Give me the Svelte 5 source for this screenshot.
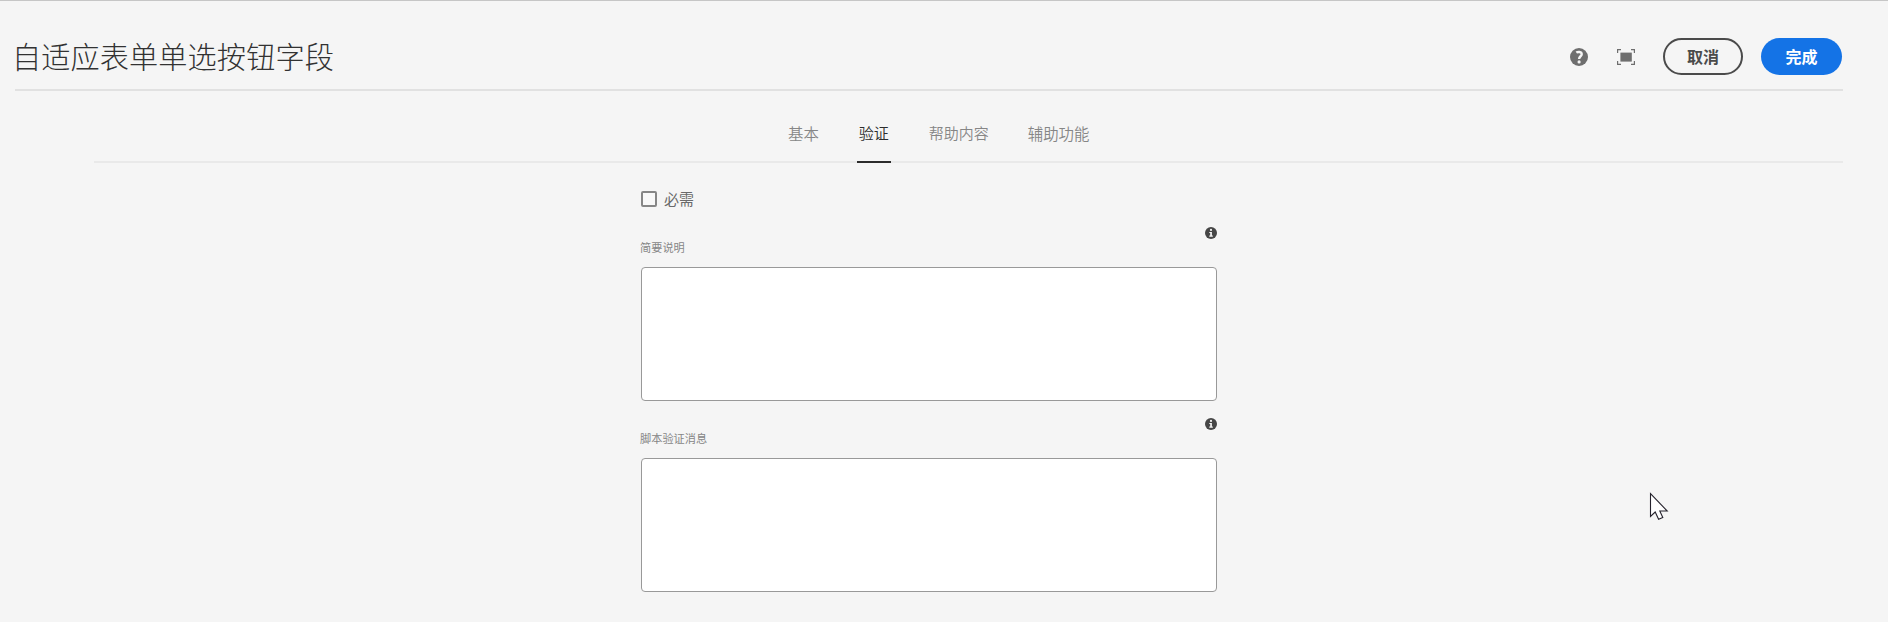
<script>
  let active = $state(1);
  const tabs = ['基本', '验证', '帮助内容', '辅助功能'];
  const fields = ['简要说明', '脚本验证消息'];
</script>

<div class="page">
  <header>
    <h1>自适应表单单选按钮字段</h1>
    <div class="actions">
      <button class="icon help" aria-label="帮助">
        <svg width="18" height="18" viewBox="0 0 18 18">
          <circle cx="9" cy="9" r="9" fill="#6e6e6e" />
          <path d="M6.3 4.6C7.6 3.7 11.7 3.3 11.7 6.3C11.7 8.2 9.1 8.4 9.1 10.9" fill="none" stroke="#f5f5f5" stroke-width="2.4" />
          <circle cx="9.1" cy="13.9" r="1.6" fill="#f5f5f5" />
        </svg>
      </button>
      <button class="icon full" aria-label="全屏">
        <svg width="18" height="16" viewBox="0 0 18 16">
          <rect x="3.4" y="3.6" width="11.4" height="9" fill="#6e6e6e" />
          <path d="M.6 4V.6H4M14 .6H17.4V4M17.4 12V15.4H14M4 15.4H.6V12" fill="none" stroke="#6e6e6e" stroke-width="1.2" />
        </svg>
      </button>
      <button class="pill cancel">取消</button>
      <button class="pill done">完成</button>
    </div>
  </header>

  <nav>
    {#each tabs as tab, i}
      <button class="tab" class:active={active === i} onclick={() => (active = i)}>{tab}</button>
    {/each}
  </nav>

  <main>
    <label class="check"><span class="box"></span><span>必需</span></label>
    {#each fields as field}
      <section>
        <svg class="info" width="12" height="12" viewBox="0 0 12 12">
          <circle cx="6" cy="6" r="6" fill="#464646" />
          <circle cx="6" cy="2.9" r="1.1" fill="#f5f5f5" />
          <path d="M4.3 5H6.9V8.6H7.8V9.7H4.3V8.6H5.2V6.1H4.3Z" fill="#f5f5f5" />
        </svg>
        <div class="name">{field}</div>
        <textarea aria-label={field}></textarea>
      </section>
    {/each}
  </main>

  <svg class="cursor" width="20" height="29" viewBox="0 0 20 29">
    <path d="M1.5 1.5V24.5L6.2 20L9.6 27.3L13.8 25.5L10.8 19H18.2Z" fill="#fff" stroke="#25222c" stroke-width="1.1" />
  </svg>
</div>

<style>
  :global(body) {
    background: #f5f5f5;
  }
  .page {
    position: relative;
    box-sizing: border-box;
    height: 622px;
    overflow: hidden;
    border-top: 1px solid #c6c6c6;
    background: #f5f5f5;
    color: #323232;
    font-family: "Noto Sans CJK SC", sans-serif;
  }
  button {
    padding: 0;
    border: 0;
    background: none;
    color: inherit;
    font-family: inherit;
  }
  header {
    display: flex;
    align-items: flex-start;
    justify-content: space-between;
    box-sizing: border-box;
    height: 90px;
    margin: 0 45px 0 15px;
    border-bottom: 2px solid #e1e1e1;
  }
  h1 {
    margin: 34px 0 0 -3px;
    font-size: 29.2px;
    line-height: 40px;
    font-family: "Noto Sans CJK SC Light", "Noto Sans CJK SC", sans-serif;
    font-weight: 300;
    letter-spacing: 0.08px;
  }
  .actions {
    display: flex;
    align-items: center;
    margin-top: 37px;
  }
  .icon svg {
    display: block;
  }
  .help {
    margin-right: 29px;
  }
  .full {
    margin-right: 28px;
  }
  .pill {
    box-sizing: border-box;
    width: 80px;
    height: 37px;
    padding-bottom: 2px;
    border-radius: 19px;
    font-size: 16px;
    line-height: 30px;
    font-weight: 700;
  }
  .cancel {
    border: 2px solid #4b4b4b;
    color: #4b4b4b;
  }
  .done {
    width: 81px;
    margin: 0 1px 0 18px;
    background: #1473e6;
    color: #fff;
  }
  nav {
    display: flex;
    gap: 35px;
    box-sizing: border-box;
    height: 72px;
    margin: 0 45px 0 94px;
    padding-left: 692px;
    border-bottom: 2px solid #e9e9e9;
  }
  .tab {
    box-sizing: border-box;
    height: 72px;
    padding: 30px 2px 16px;
    border-bottom: 2px solid transparent;
    color: #868686;
    font-size: 15.4px;
    line-height: 24px;
    font-weight: 350;
    white-space: nowrap;
  }
  .tab.active {
    border-color: #2c2c2c;
    color: #2c2c2c;
  }
  .tab:nth-child(2) {
    margin-left: 1px;
    font-size: 15px;
  }
  .tab:nth-child(3) {
    margin-left: 1px;
    font-size: 15px;
  }
  main {
    width: 576px;
    margin-left: 641px;
  }
  .check {
    display: flex;
    align-items: center;
    gap: 7px;
    height: 24px;
    padding-top: 24px;
    color: #6a6a6a;
    font-size: 15px;
    line-height: 24px;
  }
  .box {
    box-sizing: border-box;
    width: 16px;
    height: 16px;
    border: 2px solid #868686;
    border-radius: 2px;
    background: #f8f8f8;
  }
  section {
    display: flex;
    flex-direction: column;
    height: 175px;
    padding-top: 16px;
  }
  .info {
    flex: none;
    align-self: flex-end;
  }
  .name {
    height: 16px;
    margin: 0 0 12px -1px;
    color: #868686;
    font-size: 11.2px;
    line-height: 16px;
  }
  textarea {
    display: block;
    box-sizing: border-box;
    width: 576px;
    height: 134px;
    padding: 8px;
    border: 1px solid #999;
    border-radius: 4px;
    outline: 0;
    resize: none;
    background: #fff;
  }
  .cursor {
    position: absolute;
    left: 1649px;
    top: 491px;
  }
</style>
